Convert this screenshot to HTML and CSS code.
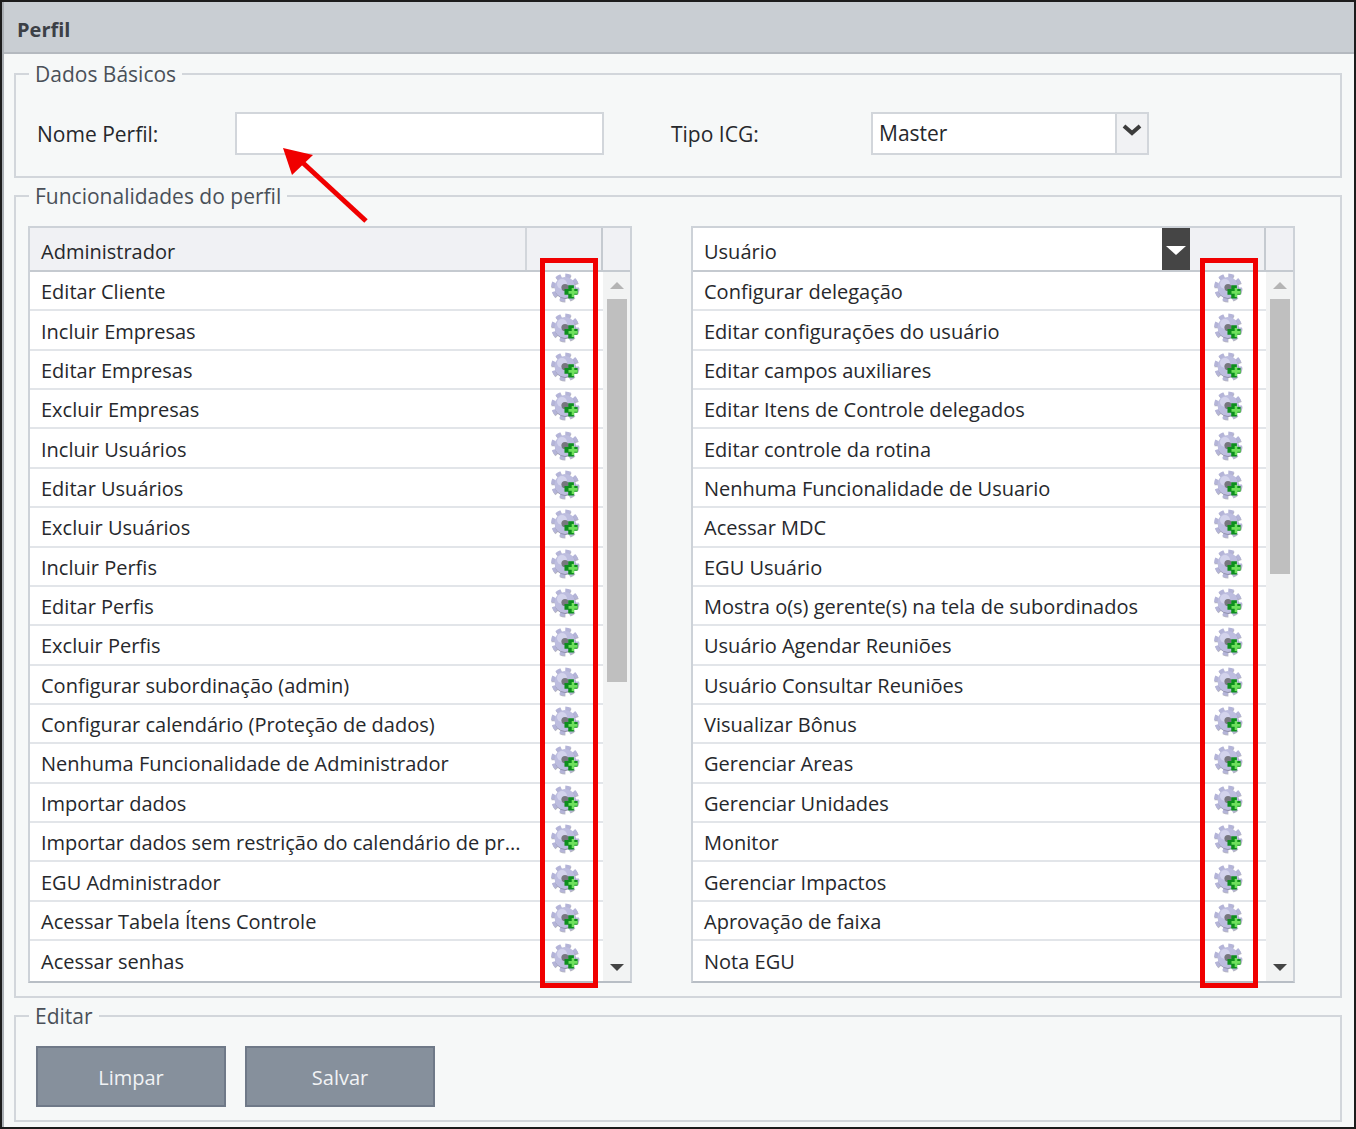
FILE: index.html
```html
<!DOCTYPE html>
<html lang="pt">
<head>
<meta charset="utf-8">
<title>Perfil</title>
<link rel="stylesheet" href="styles.css">
</head>
<body>
<svg class="defs" width="0" height="0" aria-hidden="true">
  <defs>
    <symbol id="gear" viewBox="0 0 30 30">
      <circle cx="14.5" cy="15.5" r="12" fill="none" stroke="#77778f" stroke-width="4" stroke-dasharray="5 4.42" opacity=".55"/>
      <circle cx="14" cy="14.5" r="12" fill="none" stroke="#b4b4d8" stroke-width="4" stroke-dasharray="5 4.42"/>
      <circle cx="14.5" cy="15.5" r="10.5" fill="#8d8da8"/>
      <circle cx="14" cy="14.5" r="10.5" fill="#bdbddf"/>
      <circle cx="11" cy="11" r="5" fill="#d3d3ec"/>
      <circle cx="14" cy="14.5" r="3.6" fill="#77777f"/>
      <path d="M17 15.5h4v-4h6v4h4v6h-4v4h-6v-4h-4z" transform="translate(-2.5 1.5) scale(.94)" fill="#0d8f1d"/>
      <path d="M20 17.5h3.2v-3.2h2.6v3.2H29v2.6h-3.2v3.2h-2.6v-3.2H20z" transform="translate(-2.5 .6)" fill="#6fe05d"/>
    </symbol>
  </defs>
</svg>
<main class="window">
  <div class="frame">
    <h1 class="title">Perfil</h1>
    <div class="content">
      <fieldset class="group basic">
        <legend>Dados Básicos</legend>
        <div class="basic-row">
          <label class="field-label name-label" for="nome">Nome Perfil:</label>
          <input class="text-input" id="nome" type="text">
          <span class="field-label type-label">Tipo ICG:</span>
          <div class="select">
            <span class="select-value">Master</span>
            <span class="select-btn">
              <svg width="22" height="14" viewBox="0 0 22 14"><path d="M3 3l8 7 8-7" fill="none" stroke="#3c3c3c" stroke-width="4"/></svg>
            </span>
          </div>
        </div>
      </fieldset>

      <fieldset class="group funcs">
        <legend>Funcionalidades do perfil</legend>
        <div class="lists">
          <section class="list">
            <div class="list-head">
              <div class="head-name">Administrador</div>
              <div class="head-icon"></div>
              <div class="head-scroll"></div>
            </div>
            <div class="list-body">
              <ul class="rows">
                <li>Editar Cliente<svg class="gear"><use href="#gear"/></svg></li>
                <li>Incluir Empresas<svg class="gear"><use href="#gear"/></svg></li>
                <li>Editar Empresas<svg class="gear"><use href="#gear"/></svg></li>
                <li>Excluir Empresas<svg class="gear"><use href="#gear"/></svg></li>
                <li>Incluir Usuários<svg class="gear"><use href="#gear"/></svg></li>
                <li>Editar Usuários<svg class="gear"><use href="#gear"/></svg></li>
                <li>Excluir Usuários<svg class="gear"><use href="#gear"/></svg></li>
                <li>Incluir Perfis<svg class="gear"><use href="#gear"/></svg></li>
                <li>Editar Perfis<svg class="gear"><use href="#gear"/></svg></li>
                <li>Excluir Perfis<svg class="gear"><use href="#gear"/></svg></li>
                <li>Configurar subordinação (admin)<svg class="gear"><use href="#gear"/></svg></li>
                <li>Configurar calendário (Proteção de dados)<svg class="gear"><use href="#gear"/></svg></li>
                <li>Nenhuma Funcionalidade de Administrador<svg class="gear"><use href="#gear"/></svg></li>
                <li>Importar dados<svg class="gear"><use href="#gear"/></svg></li>
                <li>Importar dados sem restrição do calendário de pr...<svg class="gear"><use href="#gear"/></svg></li>
                <li>EGU Administrador<svg class="gear"><use href="#gear"/></svg></li>
                <li>Acessar Tabela Ítens Controle<svg class="gear"><use href="#gear"/></svg></li>
                <li>Acessar senhas<svg class="gear"><use href="#gear"/></svg></li>
              </ul>
              <div class="scrollbar">
                <span class="arrow up"></span>
                <span class="track"><span class="thumb thumb-long"></span></span>
                <span class="arrow down"></span>
              </div>
            </div>
          </section>

          <section class="list">
            <div class="list-head">
              <div class="head-name head-white">Usuário</div>
              <div class="head-drop"><span class="drop-arrow"></span></div>
              <div class="head-icon head-icon-short"></div>
              <div class="head-scroll"></div>
            </div>
            <div class="list-body">
              <ul class="rows">
                <li>Configurar delegação<svg class="gear"><use href="#gear"/></svg></li>
                <li>Editar configurações do usuário<svg class="gear"><use href="#gear"/></svg></li>
                <li>Editar campos auxiliares<svg class="gear"><use href="#gear"/></svg></li>
                <li>Editar Itens de Controle delegados<svg class="gear"><use href="#gear"/></svg></li>
                <li>Editar controle da rotina<svg class="gear"><use href="#gear"/></svg></li>
                <li>Nenhuma Funcionalidade de Usuario<svg class="gear"><use href="#gear"/></svg></li>
                <li>Acessar MDC<svg class="gear"><use href="#gear"/></svg></li>
                <li>EGU Usuário<svg class="gear"><use href="#gear"/></svg></li>
                <li>Mostra o(s) gerente(s) na tela de subordinados<svg class="gear"><use href="#gear"/></svg></li>
                <li>Usuário Agendar Reuniões<svg class="gear"><use href="#gear"/></svg></li>
                <li>Usuário Consultar Reuniões<svg class="gear"><use href="#gear"/></svg></li>
                <li>Visualizar Bônus<svg class="gear"><use href="#gear"/></svg></li>
                <li>Gerenciar Areas<svg class="gear"><use href="#gear"/></svg></li>
                <li>Gerenciar Unidades<svg class="gear"><use href="#gear"/></svg></li>
                <li>Monitor<svg class="gear"><use href="#gear"/></svg></li>
                <li>Gerenciar Impactos<svg class="gear"><use href="#gear"/></svg></li>
                <li>Aprovação de faixa<svg class="gear"><use href="#gear"/></svg></li>
                <li>Nota EGU<svg class="gear"><use href="#gear"/></svg></li>
              </ul>
              <div class="scrollbar">
                <span class="arrow up"></span>
                <span class="track"><span class="thumb thumb-short"></span></span>
                <span class="arrow down"></span>
              </div>
            </div>
          </section>
        </div>
      </fieldset>

      <fieldset class="group edit">
        <legend>Editar</legend>
        <div class="actions">
          <button class="btn" type="button">Limpar</button>
          <button class="btn" type="button">Salvar</button>
        </div>
      </fieldset>
    </div>
  </div>
  <div class="mark mark-left"></div>
  <div class="mark mark-right"></div>
  <svg class="callout" width="90" height="80" viewBox="0 0 90 80" aria-hidden="true">
    <path d="M86 76L22 17" stroke="#f00000" stroke-width="5" fill="none"/>
    <path d="M3 3L33 10L12 30Z" fill="#f00000"/>
  </svg>
</main>
</body>
</html>
```

FILE: styles.css
```css
* { box-sizing: border-box; }
html, body { margin: 0; padding: 0; }
body {
  width: 1356px;
  height: 1129px;
  overflow: hidden;
  background: #fff;
  font-family: "Open Sans", "Noto Sans", sans-serif;
  color: #26282c;
}
.defs { position: absolute; }
.window {
  position: relative;
  width: 1356px;
  height: 1129px;
  border: 2px solid #1c1c1c;
}
.frame {
  height: 100%;
  border-left: 2px solid #a9aeb3;
  background: #f6f8f8;
}
.title {
  margin: 0;
  height: 52px;
  padding: 0 0 0 13px;
  background: #c9ced3;
  border-bottom: 2px solid #b4b9bf;
  font-size: 20px;
  font-weight: 700;
  line-height: 56px;
  color: #3c4046;
}
.content { padding: 6px 12px 0 10px; }
.group {
  margin: 0 0 4px;
  padding: 0;
  border: 2px solid #d2d6db;
  min-width: 0;
}
legend {
  margin-left: 13px;
  padding: 0 6px;
  height: 28px;
  font-size: 21px;
  line-height: 28px;
  color: #4a5058;
}
.basic-row {
  display: flex;
  align-items: center;
  height: 43px;
  margin: 24px 0 21px;
}
.field-label { font-size: 21px; color: #26282c; }
.name-label { width: 198px; margin-left: 21px; }
.type-label { width: 200px; margin-left: 67px; }
.text-input {
  width: 369px;
  height: 43px;
  background: #fff;
  border: 2px solid #d2d6db;
  outline: 0;
}
.select {
  display: flex;
  width: 278px;
  height: 43px;
  background: #fff;
  border: 2px solid #d2d6db;
}
.select-value {
  flex: 1;
  padding-left: 6px;
  font-size: 21px;
  line-height: 39px;
  color: #26282c;
}
.select-btn {
  display: flex;
  align-items: flex-start;
  justify-content: center;
  width: 32px;
  padding-top: 9px;
  background: #f1f2f4;
  border-left: 2px solid #d2d6db;
}
.lists {
  display: flex;
  gap: 59px;
  margin: 16px 0 13px 12px;
}
.list {
  width: 604px;
  height: 757px;
  border: 2px solid #cdd2d8;
  border-bottom-color: #b8bec5;
  background: #fff;
}
.list-head {
  display: flex;
  height: 44px;
  border-bottom: 2px solid #c5cad0;
  background: #f0f1f4;
}
.head-name {
  flex: 1;
  padding-left: 11px;
  font-size: 20px;
  line-height: 47px;
  color: #26282c;
  border-right: 2px solid #d2d6db;
}
.head-white { background: #fff; border-right: 0; }
.head-drop {
  display: flex;
  align-items: center;
  justify-content: center;
  width: 28px;
  background: #454545;
}
.drop-arrow {
  width: 0;
  height: 0;
  margin-top: 2px;
  border: 10px solid transparent;
  border-top: 9px solid #fff;
  border-bottom: 0;
}
.head-icon { width: 76px; border-right: 2px solid #c5cad0; }
.head-icon-short { width: 76px; }
.head-scroll { width: 27px; }
.list-body { display: flex; height: 709px; }
.rows {
  flex: 1;
  display: grid;
  grid-auto-rows: 39.36px;
  margin: 0;
  padding: 0;
  list-style: none;
}
.rows li {
  display: flex;
  align-items: center;
  justify-content: space-between;
  padding: 2px 22px 0 11px;
  border-bottom: 2px solid #e2e5e9;
  font-size: 20px;
  white-space: nowrap;
  color: #26282c;
}
.rows li:last-child { border-bottom: 0; }
.gear {
  width: 30px;
  height: 30px;
  margin-top: -7px;
  flex: none;
  filter: blur(.5px);
}
.scrollbar {
  display: flex;
  flex-direction: column;
  align-items: center;
  width: 27px;
  background: #f2f3f3;
}
.track {
  flex: 1;
  width: 20px;
  padding-top: 10px;
}
.thumb { display: block; width: 20px; background: #bfbfbf; }
.thumb-long { height: 383px; }
.thumb-short { height: 275px; }
.arrow { width: 0; height: 0; border-left: 7px solid transparent; border-right: 7px solid transparent; }
.arrow.up { margin-top: 10px; border-bottom: 7px solid #b4b4b4; }
.arrow.down { margin-bottom: 10px; border-top: 7px solid #444; }
.actions {
  display: flex;
  gap: 19px;
  margin: 16px 0 13px 20px;
}
.btn {
  width: 190px;
  height: 61px;
  padding: 2px 0 0;
  background: #86909c;
  border: 2px solid #6f7988;
  border-radius: 0;
  font-family: inherit;
  font-size: 20px;
  color: #f1f3f5;
}
.mark {
  position: absolute;
  top: 256px;
  width: 58px;
  height: 730px;
  border: 5px solid #f00000;
}
.mark-left { left: 538px; }
.mark-right { left: 1198px; }
.callout { position: absolute; left: 278px; top: 143px; }
```
